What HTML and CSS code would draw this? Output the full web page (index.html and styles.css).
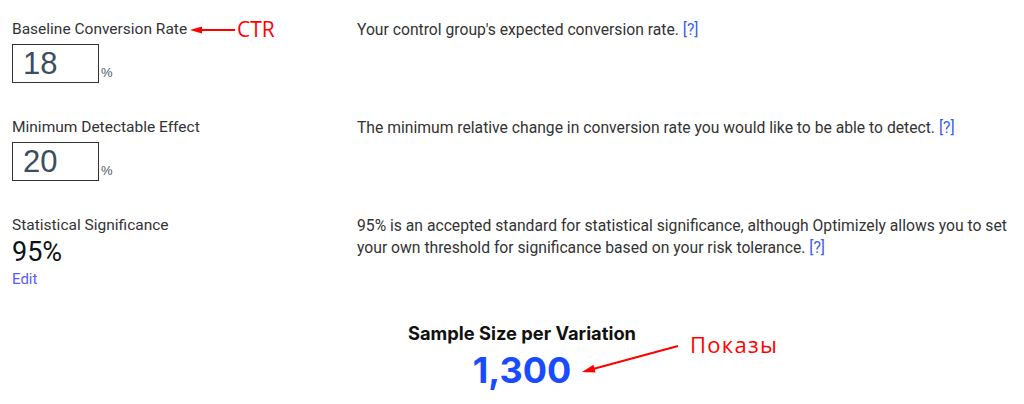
FILE: index.html
```html
<!DOCTYPE html>
<html lang="en">
<head>
    <meta charset="UTF-8">
    <title>Sample Size Calculator</title>
    <link rel="stylesheet" href="styles.css">
</head>
<body>
    <div class="page">
        <div class="row row-first">
            <div class="field">
                <div class="label">Baseline Conversion Rate</div>
                <div class="input-line">
                    <div class="input">18</div>
                    <span class="unit">%</span>
                </div>
            </div>
            <div class="desc">Your control group's expected conversion rate. <a href="#">[?]</a></div>
        </div>

        <div class="row">
            <div class="field">
                <div class="label">Minimum Detectable Effect</div>
                <div class="input-line">
                    <div class="input">20</div>
                    <span class="unit">%</span>
                </div>
            </div>
            <div class="desc">The minimum relative change in conversion rate you would like to be able to detect. <a href="#">[?]</a></div>
        </div>

        <div class="row">
            <div class="field">
                <div class="label">Statistical Significance</div>
                <div class="big-value">95%</div>
                <a href="#" class="edit">Edit</a>
            </div>
            <div class="desc">95% is an accepted standard for statistical significance, although Optimizely allows you to set your own threshold for significance based on your risk tolerance. <a href="#">[?]</a></div>
        </div>

        <div class="result">
            <div class="result-title">Sample Size per Variation</div>
            <div class="result-value">1,300</div>
        </div>

        <!-- пометки поверх скриншота -->
        <svg class="arrow arrow-ctr" width="47" height="10" viewBox="0 0 47 10">
            <line x1="11" y1="5" x2="46" y2="5" stroke="#f00" stroke-width="2"/>
            <polygon points="1,5 13,1.5 13,8.5" fill="#f00"/>
        </svg>
        <span class="note note-ctr">CTR</span>

        <svg class="arrow arrow-shows" width="100" height="34" viewBox="0 0 100 34">
            <line x1="13" y1="27" x2="98" y2="4" stroke="#f00" stroke-width="2"/>
            <polygon points="2,30 15.5,30.5 13.5,22.7" fill="#f00"/>
        </svg>
        <span class="note note-shows">Показы</span>
    </div>
</body>
</html>
```

FILE: styles.css
```css
body {
    margin: 0;
    font-family: 'Roboto', 'Liberation Sans', sans-serif;
    color: #333;
    background: #fff;
}
.page {
    position: relative;
    width: 1024px;
    height: 404px;
    padding: 19px 0 0 12px;
    box-sizing: border-box;
    overflow: hidden;
}
.row {
    display: flex;
    margin-top: 34px;
}
.row-first {
    margin-top: 0;
}
.field {
    width: 345px;
    flex-shrink: 0;
}
.label {
    font-size: 15.5px;
    line-height: 20px;
    color: #333;
}
.input-line {
    display: flex;
    align-items: flex-end;
    margin-top: 5px;
}
.input {
    width: 75px;
    height: 37px;
    border: 1px solid #333;
    padding-left: 10px;
    font-family: 'Liberation Sans', Arial, sans-serif;
    font-size: 31px;
    line-height: 38px;
    color: #3b4d5e;
}
.unit {
    font-family: 'Liberation Sans', Arial, sans-serif;
    font-size: 13px;
    color: #4a5a6a;
    margin-left: 2px;
    margin-bottom: 3px;
}
.desc {
    width: 665px;
    font-size: 15.7px;
    line-height: 22px;
    color: #333;
}
.desc a {
    color: #3a5cf0;
    text-decoration: none;
}
.big-value {
    margin-top: 2px;
    font-size: 27px;
    line-height: 30px;
    color: #111;
}
.edit {
    display: block;
    margin-top: 2px;
    font-size: 15px;
    line-height: 20px;
    color: #5a5cf8;
    text-decoration: none;
}
.result {
    margin-top: 32px;
    margin-left: 8px;
    text-align: center;
}
.result-title {
    font-family: 'Inter', sans-serif;
    font-weight: 700;
    font-size: 18.3px;
    line-height: 24px;
    color: #111;
}
.result-value {
    margin-top: 3px;
    font-family: 'Inter', sans-serif;
    font-weight: 700;
    font-size: 36px;
    line-height: 44px;
    color: #1a4cff;
}
.arrow {
    position: absolute;
}
.arrow-ctr {
    left: 189px;
    top: 25px;
}
.arrow-shows {
    left: 580px;
    top: 342px;
}
.note {
    position: absolute;
    color: #f00;
    font-family: 'Open Sans', sans-serif;
    line-height: normal;
}
.note-ctr {
    left: 237px;
    top: 15px;
    font-size: 21px;
}
.note-shows {
    left: 690px;
    top: 329px;
    font-size: 22px;
    letter-spacing: 1.3px;
}
```
